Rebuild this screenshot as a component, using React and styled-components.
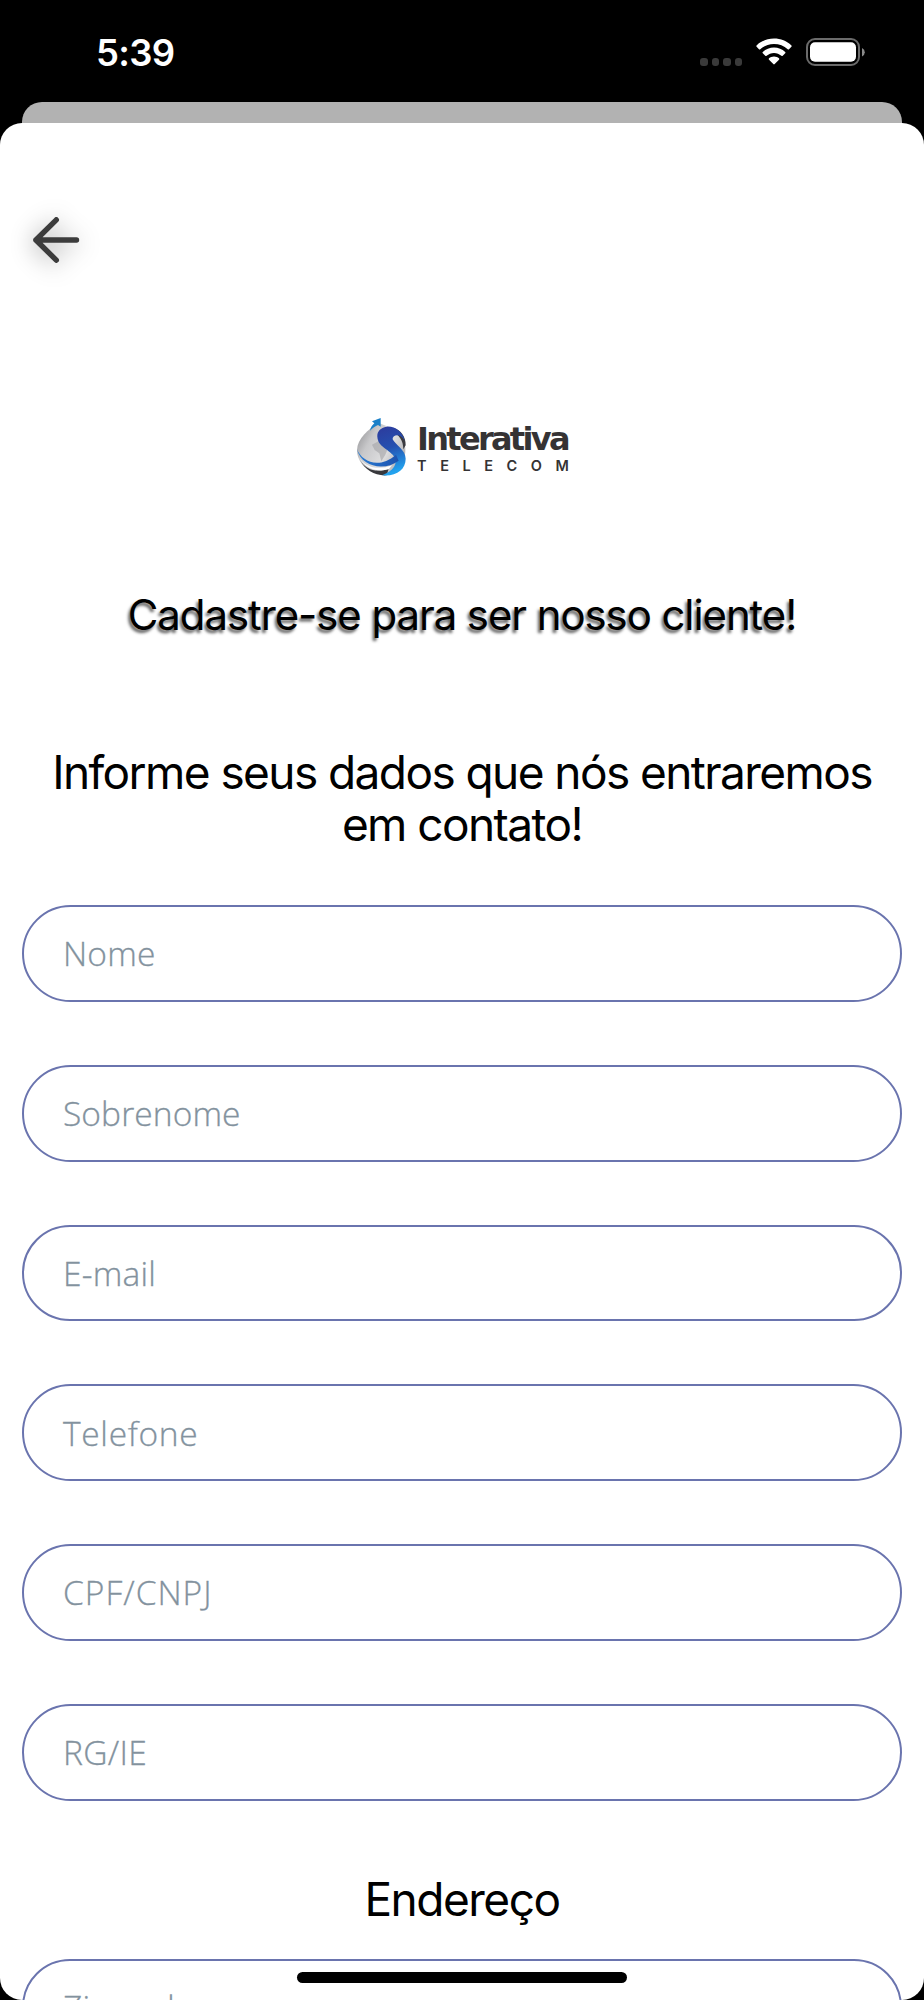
import React, { useState } from "react";
import styled, { createGlobalStyle } from "styled-components";

const fields = [
  { name: "nome", label: "Nome", spacing: 0.2 },
  { name: "sobrenome", label: "Sobrenome", spacing: 0.1 },
  { name: "email", label: "E-mail", spacing: 0.2 },
  { name: "telefone", label: "Telefone", spacing: 0.7 },
  { name: "cpf", label: "CPF/CNPJ", spacing: 1 },
  { name: "rg", label: "RG/IE", spacing: 0.3 },
];

const addressFields = [{ name: "zip", label: "Zip code", spacing: 0.1 }];

const WifiIcon = () => (
  <svg width="36" height="28" viewBox="0 0 36 28" fill="#fff">
    <path d="M18 0.6C24.7 0.6 30.8 3.1 35.4 7.4Q36.1 8.1 35.4 8.8L33 11.3Q32.4 11.9 31.7 11.2C28 7.9 23.2 6 18 6S8 7.9 4.3 11.2Q3.6 11.9 3 11.3L0.6 8.8Q-0.1 8.1 0.6 7.4C5.2 3.1 11.3 0.6 18 0.6Z" />
    <path d="M18 9.6C22.3 9.6 26.2 11.2 29.2 13.9Q29.9 14.6 29.2 15.3L26.7 17.8Q26.1 18.4 25.4 17.8C23.4 16.1 20.8 15 18 15S12.6 16.1 10.6 17.8Q9.9 18.4 9.3 17.8L6.8 15.3Q6.1 14.6 6.8 13.9C9.8 11.2 13.7 9.6 18 9.6Z" />
    <path d="M18 18.5C20 18.5 21.7 19.2 23 20.3Q23.7 21 23 21.7L18.7 26.1Q18 26.8 17.3 26.1L13 21.7Q12.3 21 13 20.3C14.3 19.2 16 18.5 18 18.5Z" />
  </svg>
);

const BatteryIcon = () => (
  <svg width="59" height="28" viewBox="0 0 59 28">
    <rect x="1" y="1" width="52" height="26" rx="8" fill="none" stroke="#6b6b6b" strokeWidth="2" />
    <rect x="4" y="4.2" width="46" height="19.6" rx="5" fill="#fff" />
    <path d="M56 10V18.5Q58.8 17 58.8 14.2T56 10Z" fill="#8a8a8a" />
  </svg>
);

const ArrowIcon = () => (
  <svg width="48" height="48" viewBox="0 0 48 48" fill="none" stroke="#3c3c3c" strokeWidth="5.4" strokeLinecap="round" strokeLinejoin="round">
    <path d="M44.5 24H3.9M24.3 3.8L3.9 24L24.3 44.2" />
  </svg>
);

const LogoMark = () => (
  <svg width="50" height="58" viewBox="18 12 150 174">
    <defs>
      <linearGradient id="drop" x1="0" y1="0" x2="1" y2="0.6">
        <stop offset="0" stopColor="#858588" />
        <stop offset="0.35" stopColor="#c8c8ca" />
        <stop offset="0.7" stopColor="#dededf" />
        <stop offset="1" stopColor="#b4b4b7" />
      </linearGradient>
      <linearGradient id="swirl" x1="0" y1="0" x2="0.2" y2="1">
        <stop offset="0" stopColor="#2d3a9c" />
        <stop offset="0.5" stopColor="#2450b0" />
        <stop offset="1" stopColor="#22a2ee" />
      </linearGradient>
      <linearGradient id="wave" x1="0" y1="0" x2="1" y2="0">
        <stop offset="0" stopColor="#2b7fd6" />
        <stop offset="1" stopColor="#1d52ae" />
      </linearGradient>
    </defs>
    <path d="M84 26C56 46 22 72 21 108C21 145 52 178 98 182C138 182 166 150 166 108C166 70 140 46 84 26Z" fill="url(#drop)" />
    <path d="M66 92L88 80L98 92L116 98L106 122L94 142L88 118L74 108Z" fill="#a3a3a7" opacity="0.6" />
    <path d="M30 138C48 170 82 176 116 164L110 184C74 186 46 168 30 138Z" fill="#38383c" />
    <path d="M26 128C44 160 84 170 126 154L116 166C80 176 44 162 26 128Z" fill="#fff" />
    <path d="M66 22L92 12V38L84 33C76 37 68 42 60 50C62 40 67 33 73 28Z" fill="#1a80c8" />
    <path d="M128 42C152 46 168 68 167 94L160 106C160 80 148 62 126 54Z" fill="#3b3b40" />
    <path d="M164 80C158 54 136 36 110 38C84 42 76 62 86 84C98 106 140 118 137 144C135 162 120 174 96 184C140 188 167 166 167 134C167 108 134 90 128 76C126 62 152 56 164 80Z" fill="url(#swirl)" />
    <path d="M21 106C36 144 88 166 138 122L146 140C104 172 34 160 21 106Z" fill="url(#wave)" />
  </svg>
);

const App = () => {
  const [values, setValues] = useState({});

  const handleChange = (e) => {
    setValues({ ...values, [e.target.name]: e.target.value });
  };

  const renderField = ({ name, label, spacing }) => (
    <Field key={name}>
      {!values[name] && <Placeholder $spacing={spacing}>{label}</Placeholder>}
      <Input name={name} value={values[name] || ""} onChange={handleChange} />
    </Field>
  );

  return (
    <Screen>
      <GlobalStyle />
      <StatusBar>
        <Clock>5:39</Clock>
        <StatusIcons>
          <Signal>
            {[...Array(4).keys()].map((index) => (
              <Dot key={index} />
            ))}
          </Signal>
          <WifiIcon />
          <BatteryIcon />
        </StatusIcons>
      </StatusBar>
      <BackSheet />
      <Sheet>
        <BackButton aria-label="Voltar">
          <ArrowIcon />
        </BackButton>
        <Logo>
          <LogoMark />
          <LogoText>
            <LogoName>Interativa</LogoName>
            <LogoTagline>
              {[..."TELECOM"].map((letter, index) => (
                <span key={index}>{letter}</span>
              ))}
            </LogoTagline>
          </LogoText>
        </Logo>
        <Title>Cadastre-se para ser nosso cliente!</Title>
        <Subtitle>
          Informe seus dados que nós entraremos
          <br />
          em contato!
        </Subtitle>
        <Form>{fields.map(renderField)}</Form>
        <SectionTitle>Endereço</SectionTitle>
        <Form>{addressFields.map(renderField)}</Form>
      </Sheet>
      <HomeIndicator />
    </Screen>
  );
};

export default App;

const GlobalStyle = createGlobalStyle`
  * {
    box-sizing: border-box;
  }

  body {
    margin: 0;
    background: #000;
    font-family: Inter, "Liberation Sans", sans-serif;
  }
`;

const Screen = styled.div`
  position: relative;
  display: flex;
  flex-direction: column;
  width: 924px;
  height: 2000px;
  overflow: hidden;
  background: #000;
`;

const StatusBar = styled.div`
  display: flex;
  flex: none;
  justify-content: space-between;
  height: 101.5px;
  padding: 30px 59px 0 96px;
  color: #fff;
`;

const Clock = styled.div`
  font-size: 36.5px;
  font-weight: 600;
  line-height: 46px;
  letter-spacing: -0.7px;
`;

const StatusIcons = styled.div`
  display: flex;
  align-items: flex-start;
  padding-top: 8px;

  svg {
    display: block;
  }

  svg + svg {
    margin-left: 14px;
  }
`;

const Signal = styled.div`
  display: flex;
  gap: 4px;
  margin: 20px 14px 0 0;
`;

const Dot = styled.span`
  width: 7.5px;
  height: 7.5px;
  border-radius: 3px;
  background: #3a3a3a;
`;

const BackSheet = styled.div`
  flex: none;
  height: 21.5px;
  margin: 0 22px;
  border-radius: 20px 20px 0 0;
  background: #b2b2b2;
`;

const Sheet = styled.main`
  display: flex;
  flex: 1;
  flex-direction: column;
  min-height: 0;
  overflow: hidden;
  padding: 0 22px;
  border-radius: 22px;
  background: #fff;
`;

const BackButton = styled.button`
  display: flex;
  flex: none;
  width: 48px;
  height: 48px;
  margin: 93px 0 0 10px;
  padding: 0;
  border: none;
  background: none;
  cursor: pointer;

  svg {
    overflow: visible;
    filter: drop-shadow(0 3px 12px rgba(0, 0, 0, 0.4));
  }
`;

const Logo = styled.div`
  display: flex;
  flex: none;
  gap: 11px;
  height: 58px;
  margin: 154px 0 0 334px;
`;

const LogoText = styled.div`
  width: 152px;
  color: #353334;
`;

const LogoName = styled.div`
  height: 39px;
  font-family: "DejaVu Sans", sans-serif;
  font-size: 32px;
  font-weight: 700;
  line-height: 43px;
  letter-spacing: -2.7px;
  white-space: nowrap;
`;

const LogoTagline = styled.div`
  display: flex;
  justify-content: space-between;
  font-size: 14.5px;
  font-weight: 600;
  line-height: 17px;
`;

const Title = styled.h1`
  margin: 113.5px 0 0;
  font-size: 42px;
  font-weight: 400;
  line-height: 50px;
  letter-spacing: -1.1px;
  text-align: center;
  text-shadow: -2px 3px 3px rgba(0, 0, 0, 0.6);
  white-space: nowrap;
`;

const Subtitle = styled.h2`
  margin: 106px 0 55.5px;
  font-size: 46px;
  font-weight: 400;
  line-height: 52px;
  letter-spacing: -1.58px;
  text-align: center;
  white-space: nowrap;
`;

const Form = styled.form`
  display: flex;
  flex: none;
  flex-direction: column;
  gap: 63px;
`;

const Field = styled.label`
  display: flex;
  flex: none;
  align-items: center;
  height: 96.75px;
  padding: 0 39px;
  border: 2px solid #6a74ae;
  border-radius: 49px;
`;

const Placeholder = styled.span`
  color: #83929e;
  font-family: "Open Sans", "Noto Sans", sans-serif;
  font-size: 33.5px;
  font-weight: 300;
  letter-spacing: ${({ $spacing }) => $spacing}px;
  white-space: nowrap;
  -webkit-text-stroke: 0.3px #83929e;
`;

const Input = styled.input`
  flex: 1;
  min-width: 0;
  padding: 0;
  border: none;
  outline: none;
  background: transparent;
  font-size: 34px;
`;

const SectionTitle = styled.h3`
  margin: 72px 0 34px;
  font-size: 46px;
  font-weight: 400;
  line-height: 52px;
  letter-spacing: -1.5px;
  text-align: center;
`;

// sits over the sheet, above the last visible field
const HomeIndicator = styled.div`
  position: absolute;
  bottom: 17px;
  left: 297px;
  width: 330px;
  height: 11px;
  border-radius: 6px;
  background: #000;
`;
